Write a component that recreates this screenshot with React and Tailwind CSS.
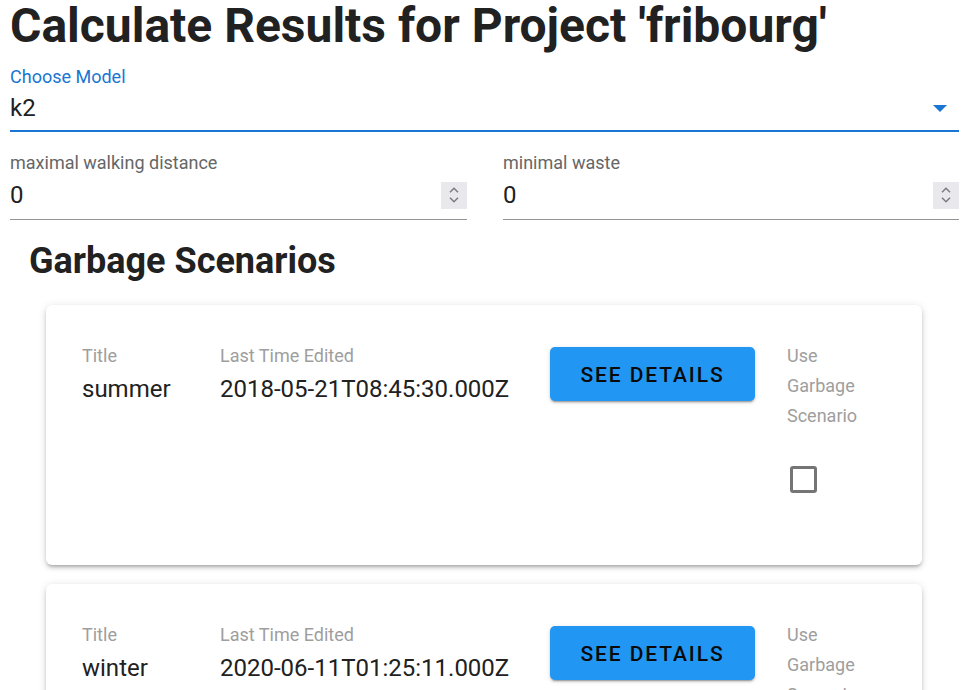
import React from "react";

function Spinner() {
  return (
    <div className="w-[26px] h-[27px] bg-[#e9e9ed] flex flex-col items-center justify-center gap-[4px]">
      <svg width="10" height="6" viewBox="0 0 10 6" fill="none">
        <path d="M1 5.3 L5 1.3 L9 5.3" stroke="#7a7a80" strokeWidth="1.5" />
      </svg>
      <svg width="10" height="6" viewBox="0 0 10 6" fill="none">
        <path d="M1 0.7 L5 4.7 L9 0.7" stroke="#7a7a80" strokeWidth="1.5" />
      </svg>
    </div>
  );
}

function NumberField({ label }) {
  return (
    <div className="border-b border-[#949494]">
      <div className="text-[18px] leading-[24px] text-[#666666]">{label}</div>
      <div className="mt-[4px] pb-[8px] flex items-center justify-between">
        <div className="text-[24px] leading-[32px] text-[#212121]">0</div>
        <Spinner />
      </div>
    </div>
  );
}

function Card({ title, date }) {
  return (
    <div className="h-[260px] bg-white rounded-[6px] shadow-[0_3px_3px_-2px_rgba(0,0,0,0.2),0_3px_4px_0_rgba(0,0,0,0.14),0_1px_8px_0_rgba(0,0,0,0.12)] p-[36px] flex shrink-0">
      <div className="w-[138px]">
        <div className="text-[18px] leading-[30px] text-[#9e9e9e]">Title</div>
        <div className="text-[24px] leading-[36px] text-[#212121]">{title}</div>
      </div>
      <div className="w-[330px]">
        <div className="text-[18px] leading-[30px] text-[#9e9e9e]">Last Time Edited</div>
        <div className="text-[24px] leading-[36px] text-[#212121]">{date}</div>
      </div>
      <div className="w-[205px] pt-[6px]">
        <button className="w-[205px] h-[54px] pt-[4px] rounded-[5px] bg-[#2196f3] text-[21px] font-medium tracking-[0.09em] text-[#0a0a0a] shadow-[0_3px_1px_-2px_rgba(0,0,0,0.2),0_2px_2px_0_rgba(0,0,0,0.14),0_1px_5px_0_rgba(0,0,0,0.12)]">
          SEE DETAILS
        </button>
      </div>
      <div className="ml-[32px]">
        <div className="text-[18px] leading-[30px] text-[#9e9e9e]">
          Use
          <br />
          Garbage
          <br />
          Scenario
        </div>
        <div className="mt-[35px] ml-[3px] w-[27px] h-[27px] border-[3px] border-[#757575] rounded-[3px]"></div>
      </div>
    </div>
  );
}

export default function App() {
  return (
    <div className="h-screen overflow-hidden bg-white font-['Roboto',sans-serif] text-[#212121] pl-[10px] pr-[5px]">
      <h1 className="text-[48px] leading-[51px] font-bold text-[#212121] whitespace-nowrap">
        Calculate Results for Project 'fribourg'
      </h1>

      <div className="mt-[14px] border-b-2 border-[#1976d2]">
        <div className="text-[18px] leading-[24px] text-[#1976d2]">Choose Model</div>
        <div className="mt-[3px] pb-[6px] flex items-center justify-between">
          <div className="text-[24px] leading-[32px] text-[#212121]">k2</div>
          <svg width="14" height="7" viewBox="0 0 14 7" className="mr-[12px]">
            <path d="M0 0 L14 0 L7 7 Z" fill="#1976d2" />
          </svg>
        </div>
      </div>

      <div className="mt-[19px] grid grid-cols-[457px_456px] gap-[36px]">
        <NumberField label="maximal walking distance" />
        <NumberField label="minimal waste" />
      </div>

      <h2 className="mt-[21px] ml-[19px] text-[36px] leading-[40px] font-bold text-[#212121]">
        Garbage Scenarios
      </h2>

      <div className="mt-[24px] ml-[36px] mr-[37px] flex flex-col gap-[19px]">
        <Card title="summer" date="2018-05-21T08:45:30.000Z" />
        <Card title="winter" date="2020-06-11T01:25:11.000Z" />
      </div>
    </div>
  );
}
